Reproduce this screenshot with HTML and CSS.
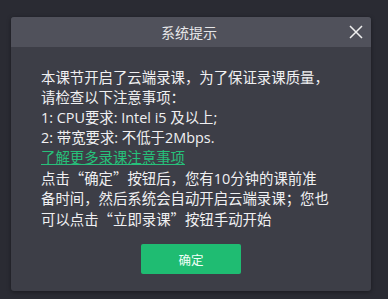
FILE: index.html
```html
<!DOCTYPE html>
<html>
<head>
<meta charset="utf-8">
<link rel="stylesheet" href="styles.css">
</head>
<body>
<div class="dialog">
  <div class="header">
    <span class="title">系统提示</span>
    <svg class="close" width="14" height="14" viewBox="0 0 14 14"><path d="M1 1 L13 13 M13 1 L1 13" stroke="#f0f0f0" stroke-width="1.5" fill="none"/></svg>
  </div>
  <div class="body">
    <p class="text">本课节开启了云端录课，为了保证录课质量，<br>请检查以下注意事项：<br>1: CPU要求: Intel i5 及以上;<br>2: 带宽要求: 不低于2Mbps.<br><a class="link">了解更多录课注意事项</a><br>点击<span class="cjk">“</span>确定<span class="cjk">”</span>按钮后，您有10分钟的课前准<br>备时间，然后系统会自动开启云端录课；您也<br>可以点击<span class="cjk">“</span>立即录课<span class="cjk">”</span>按钮手动开始</p>
    <div class="actions"><button class="ok">确定</button></div>
  </div>
</div>
</body>
</html>
```
FILE: styles.css
```css
html, body { margin: 0; padding: 0; }
body {
  width: 388px; height: 299px;
  background: #2a2b33;
  font-family: "Open Sans", "Noto Sans CJK SC", sans-serif;
  padding: 17px 0 0 11px;
  box-sizing: border-box;
}
.dialog {
  width: 360px; height: 274px;
  background: #3d3e47;
  border-radius: 3px;
  box-shadow: 0 1px 4px rgba(0,0,0,0.4);
  display: flex; flex-direction: column;
  overflow: hidden;
}
.header {
  height: 30px; flex: none;
  background: #50515b;
  display: flex; align-items: center; justify-content: center;
  position: relative;
}
.title { color: #e6e6e8; font-size: 14px; margin-left: -4px; font-family: "Noto Sans CJK SC", sans-serif; }
.close { position: absolute; right: 8px; top: 8px; }
.body { padding: 21px 0 0 30px; display: flex; flex-direction: column; }
.text {
  margin: 0; color: #f0f0f2; font-size: 14.4px; line-height: 20px;
  white-space: nowrap; letter-spacing: 0;
}
.cjk { font-family: "Noto Sans CJK SC", sans-serif; }
.link { color: #27c07a; text-decoration: underline; }
.actions { display: flex; padding-left: 100px; margin-top: 14px; }
.ok {
  width: 100px; height: 30px; border: none; border-radius: 2px;
  background: #1fbc72; color: #f2fff8; font-family: "Noto Sans CJK SC", sans-serif; font-size: 12.5px;
  padding: 0;
}
```
